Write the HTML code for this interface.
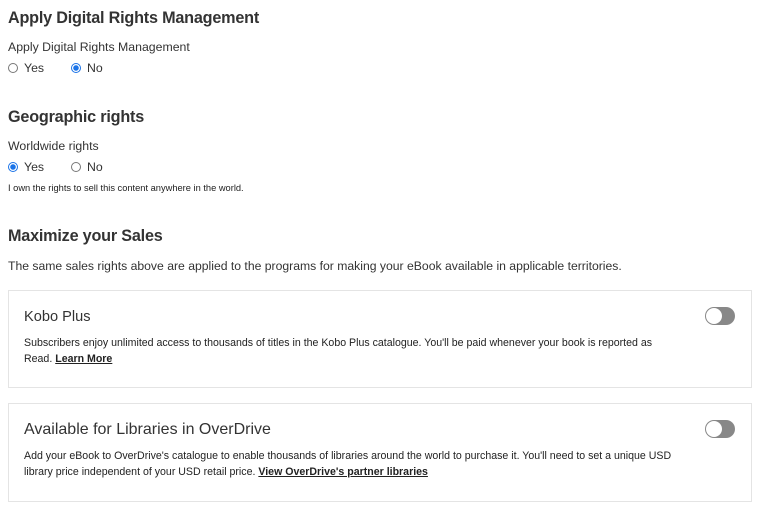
<!DOCTYPE html><html><head><style>
body{margin:0;width:774px;height:514px;background:#fff;font-family:"Liberation Sans",sans-serif;color:#222;position:relative;overflow:hidden}
div,span{position:absolute;white-space:nowrap}
.h{font-size:16.2px;font-weight:bold;color:#333;letter-spacing:-0.2px}
.l{font-size:12.3px;color:#333}
.r{width:8px;height:8px;border:1px solid #777;border-radius:50%;background:#fff}
.r.on{border:1px solid #1a73e8;background:radial-gradient(circle,#1a73e8 0 2.5px,#fff 3px)}
.box{left:8px;width:742px;border:1px solid #e4e4e4;background:#fff}
.t{font-size:14.6px;color:#333}
.d{font-size:10.6px;color:#222;line-height:16px}
.d b{text-decoration:underline;font-weight:bold}
.tg{width:30px;height:18px;border-radius:10px;background:#888}
.tg::after{content:"";position:absolute;left:1px;top:1px;width:16px;height:16px;border-radius:50%;background:#fff}
</style></head><body>
<div class="h" style="left:8px;top:9px">Apply Digital Rights Management</div>
<div class="l" style="left:8px;top:40px">Apply Digital Rights Management</div>
<div class="r" style="left:8px;top:63px"></div><div class="l" style="left:24px;top:61px">Yes</div>
<div class="r on" style="left:71px;top:63px"></div><div class="l" style="left:87px;top:61px">No</div>
<div class="h" style="left:8px;top:108px">Geographic rights</div>
<div class="l" style="left:8px;top:139px">Worldwide rights</div>
<div class="r on" style="left:8px;top:162px"></div><div class="l" style="left:24px;top:160px">Yes</div>
<div class="r" style="left:71px;top:162px"></div><div class="l" style="left:87px;top:160px">No</div>
<div style="left:8px;top:183px;font-size:9.3px;color:#222">I own the rights to sell this content anywhere in the world.</div>
<div class="h" style="left:8px;top:227px">Maximize your Sales</div>
<div class="l" style="left:8px;top:259px;font-size:12.2px">The same sales rights above are applied to the programs for making your eBook available in applicable territories.</div>
<div class="box" style="top:290px;height:96px">
<div class="t" style="left:15px;top:18px">Kobo Plus</div>
<div class="tg" style="left:696px;top:16px"></div>
<div class="d" style="left:15px;top:44px">Subscribers enjoy unlimited access to thousands of titles in the Kobo Plus catalogue. You'll be paid whenever your book is reported as<br>Read. <b>Learn More</b></div>
</div>
<div class="box" style="top:403px;height:97px">
<div class="t" style="left:15px;top:17px;font-size:16px">Available for Libraries in OverDrive</div>
<div class="tg" style="left:696px;top:16px"></div>
<div class="d" style="left:15px;top:44px">Add your eBook to OverDrive's catalogue to enable thousands of libraries around the world to purchase it. You'll need to set a unique USD<br>library price independent of your USD retail price. <b>View OverDrive's partner libraries</b></div>
</div>
</body></html>
